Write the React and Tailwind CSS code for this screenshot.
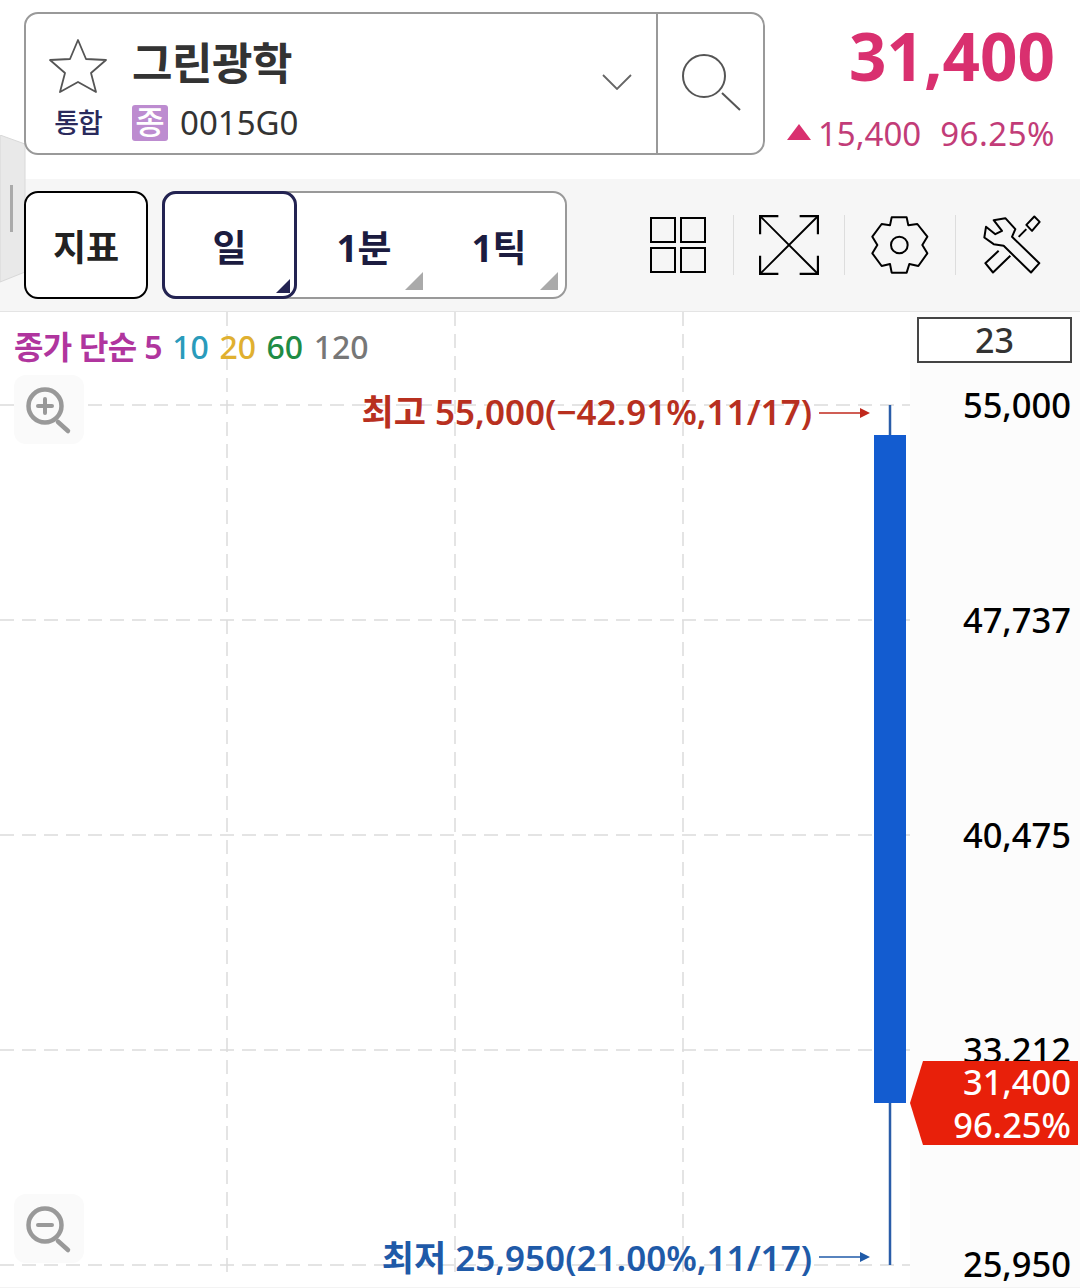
const Corner = ({ className }) => (
  <svg viewBox="0 0 18 18" className={className}>
    <polygon points="18,0 18,18 0,18" fill="currentColor" />
  </svg>
);

const Star = () => (
  <svg viewBox="0 0 60 56" className="w-[60px] h-[56px] translate-y-[3px]" fill="none" stroke="#555" strokeWidth="1.8" strokeLinejoin="round">
    <polygon points="30,2 38,21 58,22 43,35 48,54 30,44 12,54 17,35 2,22 22,21" />
  </svg>
);

const ZoomIcon = ({ plus }) => (
  <svg viewBox="0 0 50 50" className="w-[50px] h-[50px]" fill="none" stroke="#999" strokeLinecap="round">
    <circle cx="21" cy="21" r="16.5" strokeWidth="4.5" />
    <path d="M34 37 L44 46" strokeWidth="4.5" />
    <path d="M14 21 H28" strokeWidth="4" />
    {plus && <path d="M21 14 V28" strokeWidth="4" />}
  </svg>
);

const Sep = () => <div className="w-px h-[60px] bg-[#ddd]" />;

export default function App() {
  return (
    <div className="relative w-[1080px] h-[1288px] bg-white overflow-hidden font-['Noto_Sans','Noto_Sans_CJK_KR',sans-serif]">
      {/* header */}
      <div className="flex h-[179px] pl-6 pt-3">
        <div className="relative z-10 flex w-[741px] h-[143px] border-2 border-[#999] rounded-[14px] bg-white">
          <div className="flex-1 flex items-center pr-[24px]">
            <div className="flex-1 pl-[22px]">
              <div className="flex items-center gap-[24px] h-[72px] pt-[12px]">
                <Star />
                <span className="text-[44px] leading-none font-bold text-[#333] tracking-[-0.5px]">그린광학</span>
              </div>
              <div className="flex items-center h-[48px] mt-[6px]">
                <span className="w-[60px] text-center text-[27px] leading-none font-medium text-[#2a2a5c] tracking-[-1px]">통합</span>
                <span className="ml-[24px] w-[36px] h-[36px] rounded-[3px] bg-[#bd8cd0] text-white text-[32px] leading-[34px] font-medium text-center">종</span>
                <span className="ml-[12px] text-[33px] leading-none text-[#333]">0015G0</span>
              </div>
            </div>
            <svg viewBox="0 0 30 16" className="w-[30px] h-[16px] -translate-y-[2px]" fill="none" stroke="#666" strokeWidth="1.8">
              <path d="M1 1 L15 15 L29 1" />
            </svg>
          </div>
          <div className="w-[107px] border-l-2 border-[#999] flex items-center justify-center">
            <svg viewBox="0 0 60 60" className="w-[60px] h-[60px] ml-[2px]" fill="none" stroke="#555" strokeWidth="2">
              <circle cx="22" cy="22" r="21" />
              <path d="M40 39 L58 56" />
            </svg>
          </div>
        </div>
        <div className="flex-1 flex flex-col items-end pr-[25px]">
          <div className="text-[65.5px] leading-none font-bold text-[#d9306f] mt-[11px]">31,400</div>
          <div className="flex items-center text-[33px] leading-none text-[#c23c78] mt-[28px]">
            <svg viewBox="0 0 24 16" className="w-[24px] h-[16px] mr-[7px] -translate-y-[1px]">
              <polygon points="12,0 24,16 0,16" fill="#d9306f" />
            </svg>
            <span>15,400</span>
            <span className="ml-[19px] tracking-[0.5px]">96.25%</span>
          </div>
        </div>
      </div>

      {/* toolbar */}
      <div className="flex items-center h-[133px] bg-[#f6f6f6] pl-6 border-b border-[#e4e4e4]">
        <div className="relative z-10 w-[124px] h-[108px] pt-[5px] bg-white border-2 border-black rounded-[14px] flex items-center justify-center text-[36px] font-semibold text-[#222]">
          지표
        </div>
        <div className="ml-[14px] flex w-[405px] h-[108px] bg-white border-2 border-[#999] rounded-[14px] text-[37px] font-bold text-[#1c1c40]">
          <div className="relative w-[135px] -m-[2px] h-[108px] pt-[5px] border-[3px] border-[#232352] rounded-[14px] flex items-center justify-center bg-white">
            일
            <Corner className="absolute right-[4px] bottom-[3px] w-[14px] h-[14px] text-[#232352]" />
          </div>
          <div className="relative w-[135px] pt-[5px] pl-[3px] flex items-center justify-center">
            1분
            <Corner className="absolute right-[7px] bottom-[7px] w-[18px] h-[18px] text-[#aaa]" />
          </div>
          <div className="relative flex-1 pt-[5px] pl-[3px] flex items-center justify-center">
            1틱
            <Corner className="absolute right-[7px] bottom-[7px] w-[18px] h-[18px] text-[#aaa]" />
          </div>
        </div>
        <div className="flex items-center ml-[83px]">
          <div className="grid grid-cols-2 gap-[4px] w-[56px]">
            <div className="h-[26px] border-2 border-black" />
            <div className="h-[26px] border-2 border-black" />
            <div className="h-[26px] border-2 border-black" />
            <div className="h-[26px] border-2 border-black" />
          </div>
          <div className="ml-[27px]"><Sep /></div>
          <svg viewBox="0 0 62 62" className="ml-[25px] w-[60px] h-[60px]" fill="none" stroke="#000" strokeWidth="2">
            <path d="M1 20 V1 H20 M42 1 H61 V20 M1 42 V61 H20 M42 61 H61 V42" strokeWidth="2.5" />
            <path d="M1 1 L61 61 M61 1 L1 61" />
          </svg>
          <div className="ml-[25px]"><Sep /></div>
          <svg viewBox="90 45 180 180" className="ml-[25px] w-[60px] h-[60px]" fill="none" stroke="#000" strokeWidth="6" strokeLinejoin="round">
            <polygon points="155,52 200,52 205,76 232,72 262,110 247,135 262,160 235,198 208,192 200,218 155,218 150,192 125,198 97,160 112,135 97,110 125,72 150,76" />
            <circle cx="178" cy="135" r="25" />
          </svg>
          <div className="ml-[25px]"><Sep /></div>
          <svg viewBox="425 40 180 185" className="ml-[26px] w-[60px] h-[62px]" fill="none" stroke="#000" strokeWidth="6" strokeLinejoin="round">
            <polygon points="460,58 495,52 525,85 515,108 597,187 572,215 490,135 460,130 432,110 437,78 465,100 485,90" />
            <polygon points="582,47 598,63 575,90 558,72" />
            <path d="M558,85 L535,108" />
            <path d="M475,150 L435,187 L458,215 L510,165" />
          </svg>
        </div>
      </div>

      {/* drawer handle */}
      <svg viewBox="0 0 26 148" className="absolute left-0 top-[135px] w-[26px] h-[148px]">
        <polygon points="0,0 25,9 25,137 0,147" fill="#e9e9e9" stroke="#d8d8d8" />
        <rect x="10" y="50" width="3" height="47" fill="#aaa" />
      </svg>

      {/* chart canvas */}
      <div className="relative h-[975px] overflow-hidden">
        <div className="absolute left-[910px] top-0 right-0 bottom-0 bg-[#fcfcfc]" />
        <svg viewBox="0 0 1080 975" className="absolute inset-0 w-[1080px] h-[975px]" fill="none">
          <g stroke="#dcdcdc" strokeWidth="1.5" strokeDasharray="14 8">
            <path d="M227 0 V966 M455 0 V966 M683 0 V966" />
            <path d="M0 93 H910 M0 308 H910 M0 523 H910 M0 738 H910 M0 953 H910" />
          </g>
          <path d="M890 93 V953" stroke="#2a5da8" strokeWidth="2.5" />
          <rect x="874" y="123" width="32" height="668" fill="#135cd0" />
          <path d="M819 101 H868" stroke="#c0281c" strokeWidth="1.5" />
          <polygon points="860,96 870,101 860,106" fill="#c0281c" />
          <path d="M819 945 H868" stroke="#1f5aa8" strokeWidth="1.5" />
          <polygon points="860,940 870,945 860,950" fill="#1f5aa8" />
        </svg>

        <div className="absolute left-[14px] top-[16px] flex gap-[10.5px] text-[32px] leading-[38px] font-medium">
          <span className="text-[#b0359e] font-semibold tracking-[-0.7px]">종가 단순 5</span>
          <span className="text-[#2a9bbb]">10</span>
          <span className="text-[#e0b030]">20</span>
          <span className="text-[#1f8c45]">60</span>
          <span className="text-[#777]">120</span>
        </div>

        <div className="absolute left-[917px] top-[5px] w-[155px] h-[46px] border-2 border-[#444] flex items-center justify-center text-[34px] font-medium text-[#333] bg-white">
          23
        </div>

        <div className="absolute left-[14px] top-[63px] w-[70px] h-[69px] rounded-[12px] bg-[#fafafa] flex items-center justify-center">
          <ZoomIcon plus />
        </div>
        <div className="absolute left-[14px] top-[882px] w-[70px] h-[69px] rounded-[12px] bg-[#fafafa] flex items-center justify-center">
          <ZoomIcon />
        </div>

        <div className="absolute right-[268px] top-[78px] text-[35px] leading-[44px] font-semibold text-[#b8301f] whitespace-nowrap">최고 55,000(−42.91%,11/17)</div>
        <div className="absolute right-[268px] top-[924px] text-[35px] leading-[44px] font-semibold text-[#1f5aa8] whitespace-nowrap">최저 25,950(21.00%,11/17)</div>

        {[
          ['55,000', 71],
          ['47,737', 286],
          ['40,475', 501],
          ['33,212', 716],
          ['25,950', 930],
        ].map(([v, top]) => (
          <div key={v} className="absolute right-[9px] text-[34.5px] leading-[44px] font-medium text-black" style={{ top }}>{v}</div>
        ))}

        <div className="absolute left-[910px] top-[749px] w-[168px] h-[84px] bg-[#e8200a] [clip-path:polygon(13px_0,100%_0,100%_100%,13px_100%,0_50%)] flex flex-col items-end justify-center pr-[7px] text-white text-[34.5px] leading-[43px] font-medium">
          <span>31,400</span>
          <span>96.25%</span>
        </div>
      </div>
      <div className="h-px bg-[#f3f3f3]" />
    </div>
  );
}
